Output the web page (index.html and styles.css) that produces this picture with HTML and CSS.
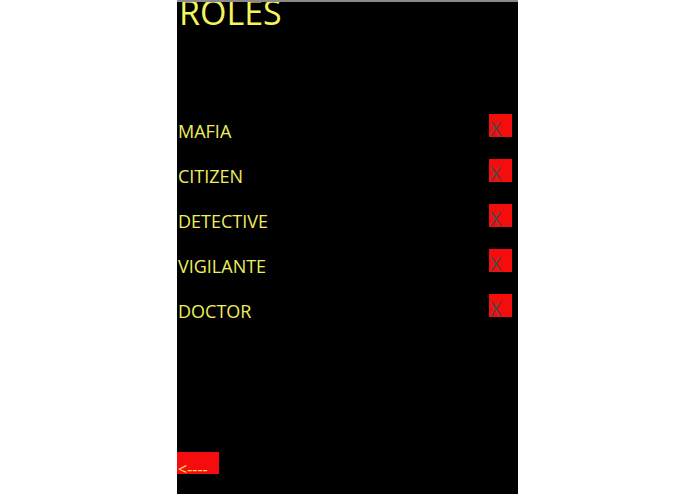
FILE: index.html
```html
<!DOCTYPE html>
<html>
<head>
<meta charset="utf-8">
<link rel="stylesheet" href="styles.css">
</head>
<body>
<div class="screen">
  <h1 class="title">ROLES</h1>
  <ul class="roles">
    <li class="role"><span class="name">MAFIA</span><span class="remove">X</span></li>
    <li class="role"><span class="name">CITIZEN</span><span class="remove">X</span></li>
    <li class="role"><span class="name">DETECTIVE</span><span class="remove">X</span></li>
    <li class="role"><span class="name">VIGILANTE</span><span class="remove">X</span></li>
    <li class="role"><span class="name">DOCTOR</span><span class="remove">X</span></li>
  </ul>
  <div class="back">&lt;----</div>
</div>
</body>
</html>
```
FILE: styles.css
```css
html, body {
  margin: 0;
  padding: 0;
  background: #ffffff;
}
body {
  display: flex;
  justify-content: center;
  font-family: "Open Sans", "Noto Sans", sans-serif;
}
.screen {
  width: 341px;
  height: 494px;
  box-sizing: border-box;
  background: #000000;
  border-top: 2px solid #8a8a8a;
  overflow: hidden;
  display: flex;
  flex-direction: column;
}
.title {
  margin: 0;
  padding-left: 2px;
  font-size: 34px;
  font-weight: normal;
  line-height: 20px;
  height: 20px;
  color: #f4f45c;
}
.roles {
  list-style: none;
  margin: 92px 0 0 0;
  padding: 0;
}
.role {
  display: flex;
  justify-content: space-between;
  align-items: flex-start;
  height: 45px;
  padding-right: 6px;
}
.name {
  margin-top: 5.5px;
  padding-left: 1px;
  font-size: 18px;
  line-height: 23px;
  color: #eeee5e;
}
.remove {
  width: 23px;
  height: 23px;
  background: #f50d0d;
  color: #4a4a4a;
  font-size: 20px;
  line-height: 29px;
  padding-left: 1px;
  box-sizing: border-box;
}
.back {
  margin-top: auto;
  margin-bottom: 20px;
  width: 42px;
  height: 22px;
  background: #f50d0d;
  color: #ffe070;
  font-size: 16px;
  line-height: 34px;
  padding-left: 1px;
  box-sizing: border-box;
  white-space: nowrap;
  overflow: visible;
}
```
